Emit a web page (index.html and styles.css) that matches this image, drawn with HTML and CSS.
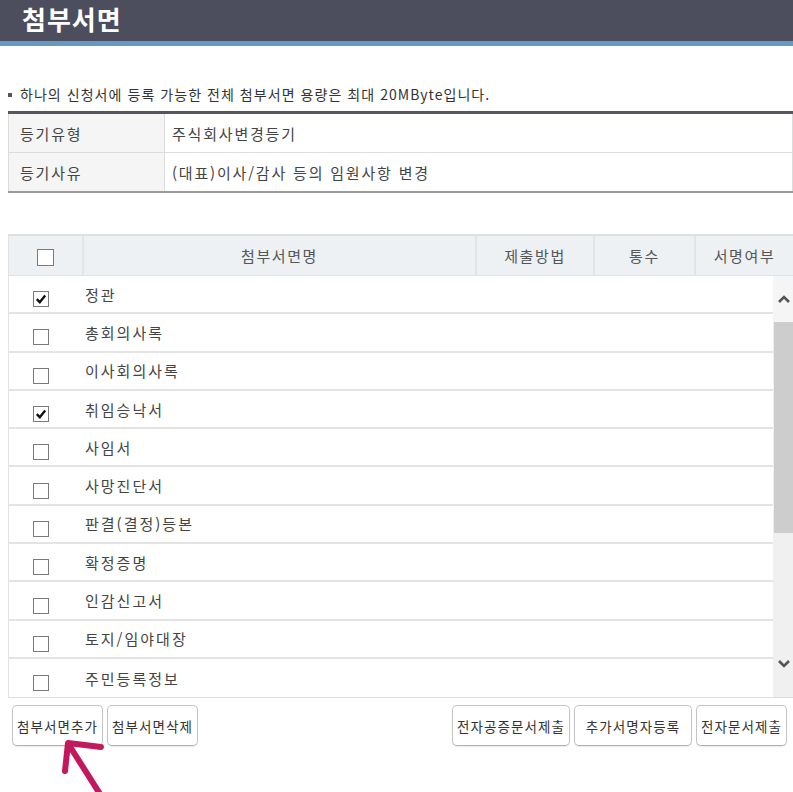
FILE: index.html
```html
<!DOCTYPE html>
<html lang="ko">
<head>
<meta charset="utf-8">
<title>첨부서면</title>
<link rel="stylesheet" href="styles.css">
</head>
<body>
<header class="page-head">
  <h1 class="page-title">첨부서면</h1>
</header>
<main class="content">
  <p class="notice"><span class="bullet"></span>하나의 신청서에 등록 가능한 전체 첨부서면 용량은 최대 20MByte입니다.</p>

  <table class="info">
    <tr><th>등기유형</th><td>주식회사변경등기</td></tr>
    <tr><th>등기사유</th><td>(대표)이사/감사 등의 임원사항 변경</td></tr>
  </table>

  <section class="grid">
    <div class="grid-head">
      <div class="hc hc-check"><span class="cb cb-head"></span></div>
      <div class="hc">첨부서면명</div>
      <div class="hc">제출방법</div>
      <div class="hc">통수</div>
      <div class="hc">서명여부</div>
    </div>
    <div class="grid-body">
      <div class="rows">
        <div class="row"><span class="cb checked"><svg viewBox="0 0 14 14"><path d="M2.8 7.2 L5.8 10.2 L11.2 3.6" fill="none" stroke="#111" stroke-width="2.4"/></svg></span><span class="name">정관</span></div>
        <div class="row"><span class="cb"></span><span class="name">총회의사록</span></div>
        <div class="row"><span class="cb"></span><span class="name">이사회의사록</span></div>
        <div class="row"><span class="cb checked"><svg viewBox="0 0 14 14"><path d="M2.8 7.2 L5.8 10.2 L11.2 3.6" fill="none" stroke="#111" stroke-width="2.4"/></svg></span><span class="name">취임승낙서</span></div>
        <div class="row"><span class="cb"></span><span class="name">사임서</span></div>
        <div class="row"><span class="cb"></span><span class="name">사망진단서</span></div>
        <div class="row"><span class="cb"></span><span class="name">판결(결정)등본</span></div>
        <div class="row"><span class="cb"></span><span class="name">확정증명</span></div>
        <div class="row"><span class="cb"></span><span class="name">인감신고서</span></div>
        <div class="row"><span class="cb"></span><span class="name">토지/임야대장</span></div>
        <div class="row"><span class="cb"></span><span class="name">주민등록정보</span></div>
      </div>
      <div class="scrollbar">
        <div class="sb-btn"><svg viewBox="0 0 14 10"><path d="M2 8 L7 3 L12 8" fill="none" stroke="#555" stroke-width="2.6"/></svg></div>
        <div class="sb-track"><div class="sb-thumb"></div></div>
        <div class="sb-btn sb-down"><svg viewBox="0 0 14 10"><path d="M2 2 L7 7 L12 2" fill="none" stroke="#555" stroke-width="2.6"/></svg></div>
      </div>
    </div>
  </section>

  <div class="actions">
    <div class="btn-group">
      <button class="btn w90">첨부서면추가</button>
      <button class="btn w91">첨부서면삭제</button>
    </div>
    <div class="btn-group">
      <button class="btn w117">전자공증문서제출</button>
      <button class="btn w117">추가서명자등록</button>
      <button class="btn w91">전자문서제출</button>
    </div>
  </div>
</main>
<svg class="pointer" viewBox="0 0 60 60" width="60" height="60">
  <g fill="none" stroke="#c4185e" stroke-width="6" stroke-linecap="round" stroke-linejoin="round">
    <path d="M50 64 L19 15"/>
    <path d="M51 17 L18 13 L15 41"/>
  </g>
</svg>
</body>
</html>
```

FILE: styles.css
```css
html, body {
  margin: 0;
  padding: 0;
  background: #fff;
  overflow: hidden;
}
body {
  width: 793px;
  height: 792px;
  position: relative;
  font-family: "Noto Sans CJK KR", "Noto Sans", sans-serif;
  color: #444;
}
.page-head {
  height: 41px;
  background: #4c4d5d;
  border-bottom: 5px solid #6797c3;
  display: flex;
  align-items: center;
  padding-left: 22px;
}
.page-title {
  margin: 0;
  color: #fff;
  font-size: 26px;
  font-weight: bold;
  letter-spacing: 1px;
  line-height: 1;
  margin-top: -4px;
}
.content {
  padding: 0 0 0 8px;
}
.notice {
  margin: 34px 0 0 0;
  height: 31px;
  padding-bottom: 4px;
  box-sizing: border-box;
  font-size: 14px;
  line-height: 22px;
  letter-spacing: 1.05px;
  color: #333;
  display: flex;
  align-items: center;
}
.bullet {
  width: 4px;
  height: 4px;
  background: #555;
  margin-right: 8px;
  margin-top: 3px;
}
.info {
  width: 785px;
  border-collapse: collapse;
  border-top: 3px solid #565660;
  border-bottom: 2px solid #9a9a9a;
  font-size: 15px;
  letter-spacing: 1.8px;
}
.info th, .info td {
  border: 1px solid #dcdcdc;
  height: 38px;
  padding: 0;
  text-align: left;
  font-weight: normal;
}
.info th {
  width: 144px;
  padding-left: 11px;
  background: #f5f5f5;
  color: #444;
}
.info td {
  padding-left: 7px;
  color: #444;
}
.grid {
  margin-top: 41px;
  width: 785px;
  border-left: 1px solid #e2e2e2;
  border-top: 2px solid #dde0e3;
}
.grid-head {
  display: grid;
  grid-template-columns: 73px 393px 118px 101px 99px;
  height: 39px;
  background: #edf1f4;
  border-bottom: 1px solid #dfe3e6;
  font-size: 15px;
  letter-spacing: 1.6px;
  color: #555;
}
.hc {
  display: flex;
  align-items: center;
  justify-content: center;
  border-left: 2px solid #e1e5e8;
}
.hc-check {
  border-left: none;
  justify-content: flex-start;
  padding-left: 28px;
}
.grid-body {
  display: flex;
  height: 421px;
  border-bottom: 1px solid #dedede;
}
.rows {
  flex: 1;
}
.row {
  height: 38.3px;
  box-sizing: border-box;
  border-bottom: 2px solid #e4e4e4;
  display: flex;
  align-items: center;
  font-size: 15px;
  letter-spacing: 2px;
  color: #444;
}
.row:last-child {
  border-bottom: none;
}
.cb {
  width: 14px;
  height: 14px;
  border: 1px solid #7a7a7a;
  background: #fff;
  display: inline-flex;
  align-items: center;
  justify-content: center;
  flex: none;
}
.row .cb {
  margin-left: 24px;
  margin-top: 10px;
}
.cb-head {
  width: 15px;
  height: 15px;
  margin-top: 3px;
}
.cb.checked svg {
  width: 14px;
  height: 14px;
}
.name {
  margin-left: 36px;
  margin-top: 0;
}
.scrollbar {
  width: 21px;
  background: #f0f0f0;
  display: flex;
  flex-direction: column;
}
.sb-btn {
  height: 46px;
  display: flex;
  align-items: center;
  justify-content: center;
  background: #f5f5f5;
}
.sb-btn svg {
  width: 14px;
  height: 10px;
}
.sb-down {
  height: 46px;
  align-items: flex-start;
  padding-top: 8px;
  box-sizing: border-box;
  background: #f0f0f0;
}
.sb-track {
  flex: 1;
}
.sb-thumb {
  height: 211px;
  background: #cdcdcd;
  margin-left: 1px;
}
.actions {
  display: flex;
  justify-content: space-between;
  width: 779px;
  margin-top: 7px;
}
.btn-group {
  display: flex;
  gap: 4px;
}
.btn-group:first-child {
  margin-left: 4px;
}
.btn {
  height: 41px;
  box-sizing: border-box;
  background: #fff;
  border: 1px solid #c4c4c4;
  border-bottom-color: #b0b0b0;
  border-radius: 5px;
  font-family: "Noto Sans CJK KR", "Noto Sans", sans-serif;
  font-size: 13.5px;
  letter-spacing: 1.1px;
  color: #333;
  padding: 0;
  box-shadow: 0 1px 1px rgba(0,0,0,0.08);
}
.w90 { width: 91px; }
.w91 { width: 91px; }
.w117 { width: 118px; }
.pointer {
  position: absolute;
  left: 50px;
  top: 730px;
  overflow: visible;
}
```
